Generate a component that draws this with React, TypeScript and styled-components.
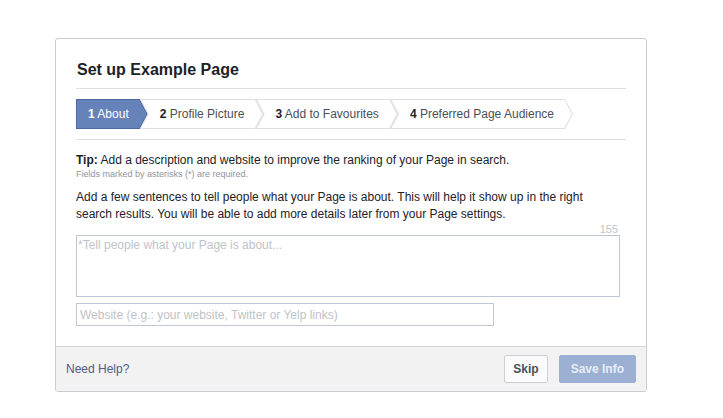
import React from "react";
import styled, { createGlobalStyle, css } from "styled-components";

const GlobalStyle = createGlobalStyle`
  body {
    margin: 0;
    background: #fff;
    font-family: "Liberation Sans", Arial, Helvetica, sans-serif;
  }
`;

const Page = styled.div`
  padding: 38px 0 0 55px;
`;

const Dialog = styled.div`
  width: 590px;
  border: 1px solid #c9cbd0;
  border-radius: 3px;
  background: #fff;
  overflow: hidden;
`;

const Body = styled.div`
  padding: 0 20px 20px 20px;
`;

const Title = styled.h2`
  margin: 0;
  padding: 22px 0 9px 1px;
  font-size: 16px;
  line-height: 18px;
  font-weight: bold;
  color: #1d2129;
  border-bottom: 1px solid #dddfe2;
`;

const Steps = styled.div`
  display: flex;
  padding: 10px 0 10px 0;
  border-bottom: 1px solid #dddfe2;
`;

const Step = styled.div<{ $active?: boolean; $first?: boolean }>`
  position: relative;
  height: 30px;
  display: flex;
  align-items: center;
  padding: 0 19px 0 ${(p) => (p.$first ? 12 : 20)}px;
  margin-left: ${(p) => (p.$first ? 0 : -8)}px;
  font-size: 12px;
  color: ${(p) => (p.$active ? "#fff" : "#4b4f56")};
  z-index: ${(p) => (p.$active ? 1 : 2)};

  &::before,
  &::after {
    content: "";
    position: absolute;
    inset: 0;
  }
  &::before {
    background: ${(p) => (p.$active ? "#4e69a2" : "#dddfe2")};
    clip-path: ${(p) =>
      p.$first
        ? `polygon(0 0, calc(100% - 8px) 0, 100% 50%, calc(100% - 8px) 100%, 0 100%)`
        : `polygon(0 0, calc(100% - 8px) 0, 100% 50%, calc(100% - 8px) 100%, 0 100%, 8px 50%)`};
  }
  &::after {
    background: ${(p) => (p.$active ? "#6583b8" : "#fff")};
    ${(p) =>
      p.$first
        ? css`
            clip-path: polygon(1px 1px, calc(100% - 8.6px) 1px, calc(100% - 1.2px) 50%, calc(100% - 8.6px) calc(100% - 1px), 1px calc(100% - 1px));
          `
        : css`
            clip-path: polygon(1.6px 1px, calc(100% - 8.6px) 1px, calc(100% - 1.2px) 50%, calc(100% - 8.6px) calc(100% - 1px), 1.6px calc(100% - 1px), 9.2px 50%);
          `}
  }
  span {
    position: relative;
    z-index: 1;
    white-space: nowrap;
  }
  b {
    color: ${(p) => (p.$active ? "#fff" : "#1d2129")};
  }
`;

const Tip = styled.div`
  margin-top: 13px;
  font-size: 12px;
  line-height: 15px;
  color: #1d2129;
`;

const Required = styled.div`
  font-size: 9px;
  line-height: 12px;
  color: #90949c;
`;

const Intro = styled.p`
  margin: 9px 0 0 0;
  font-size: 12px;
  line-height: 17px;
  color: #1d2129;
`;

const Counter = styled.div`
  width: 542px;
  text-align: right;
  font-size: 11px;
  line-height: 12px;
  color: #bec3c9;
`;

const fieldBase = css`
  display: block;
  box-sizing: border-box;
  border: 1px solid #bdc7d8;
  font-family: "Liberation Sans", Arial, sans-serif;
  font-size: 12px;
  color: #1d2129;
  outline: none;
  &::placeholder {
    color: #bec3c9;
  }
`;

const About = styled.textarea`
  ${fieldBase}
  margin-top: 0;
  width: 544px;
  height: 62px;
  padding: 2px 1px;
  resize: none;
`;

const Website = styled.input`
  ${fieldBase}
  margin-top: 6px;
  width: 418px;
  height: 23px;
  padding: 0 3px;
`;

const Footer = styled.div`
  display: flex;
  align-items: center;
  justify-content: space-between;
  height: 44px;
  padding: 0 10px;
  background: #f2f2f2;
  border-top: 1px solid #d3d5d9;
`;

const HelpLink = styled.a`
  font-size: 12px;
  color: #4e5d84;
  text-decoration: none;
`;

const Actions = styled.div`
  display: flex;
  gap: 11px;
`;

const Button = styled.button<{ $primary?: boolean }>`
  height: 28px;
  padding: 0 ${(p) => (p.$primary ? 11 : 8)}px;
  border-radius: 2px;
  font-family: "Liberation Sans", Arial, sans-serif;
  font-size: 12px;
  font-weight: bold;
  border: 1px solid ${(p) => (p.$primary ? "#9cb0d3" : "#ccd0d5")};
  background: ${(p) => (p.$primary ? "#9cb0d3" : "#fbfbfb")};
  color: ${(p) => (p.$primary ? "#e8edf5" : "#4b4f56")};
`;

const steps = [
  { n: 1, label: "About" },
  { n: 2, label: "Profile Picture" },
  { n: 3, label: "Add to Favourites" },
  { n: 4, label: "Preferred Page Audience" },
];

export default function App() {
  return (
    <>
      <GlobalStyle />
      <Page>
        <Dialog>
          <Body>
            <Title>Set up Example Page</Title>
            <Steps>
              {steps.map((s, i) => (
                <Step key={s.n} $first={i === 0} $active={i === 0}>
                  <span>
                    <b>{s.n}</b> {s.label}
                  </span>
                </Step>
              ))}
            </Steps>
            <Tip>
              <b>Tip:</b> Add a description and website to improve the ranking of your Page in search.
            </Tip>
            <Required>Fields marked by asterisks (*) are required.</Required>
            <Intro>
              Add a few sentences to tell people what your Page is about. This will help it show up in the right
              <br />
              search results. You will be able to add more details later from your Page settings.
            </Intro>
            <Counter>155</Counter>
            <About placeholder="*Tell people what your Page is about..." />
            <Website placeholder="Website (e.g.: your website, Twitter or Yelp links)" />
          </Body>
          <Footer>
            <HelpLink href="#">Need Help?</HelpLink>
            <Actions>
              <Button>Skip</Button>
              <Button $primary>Save Info</Button>
            </Actions>
          </Footer>
        </Dialog>
      </Page>
    </>
  );
}
